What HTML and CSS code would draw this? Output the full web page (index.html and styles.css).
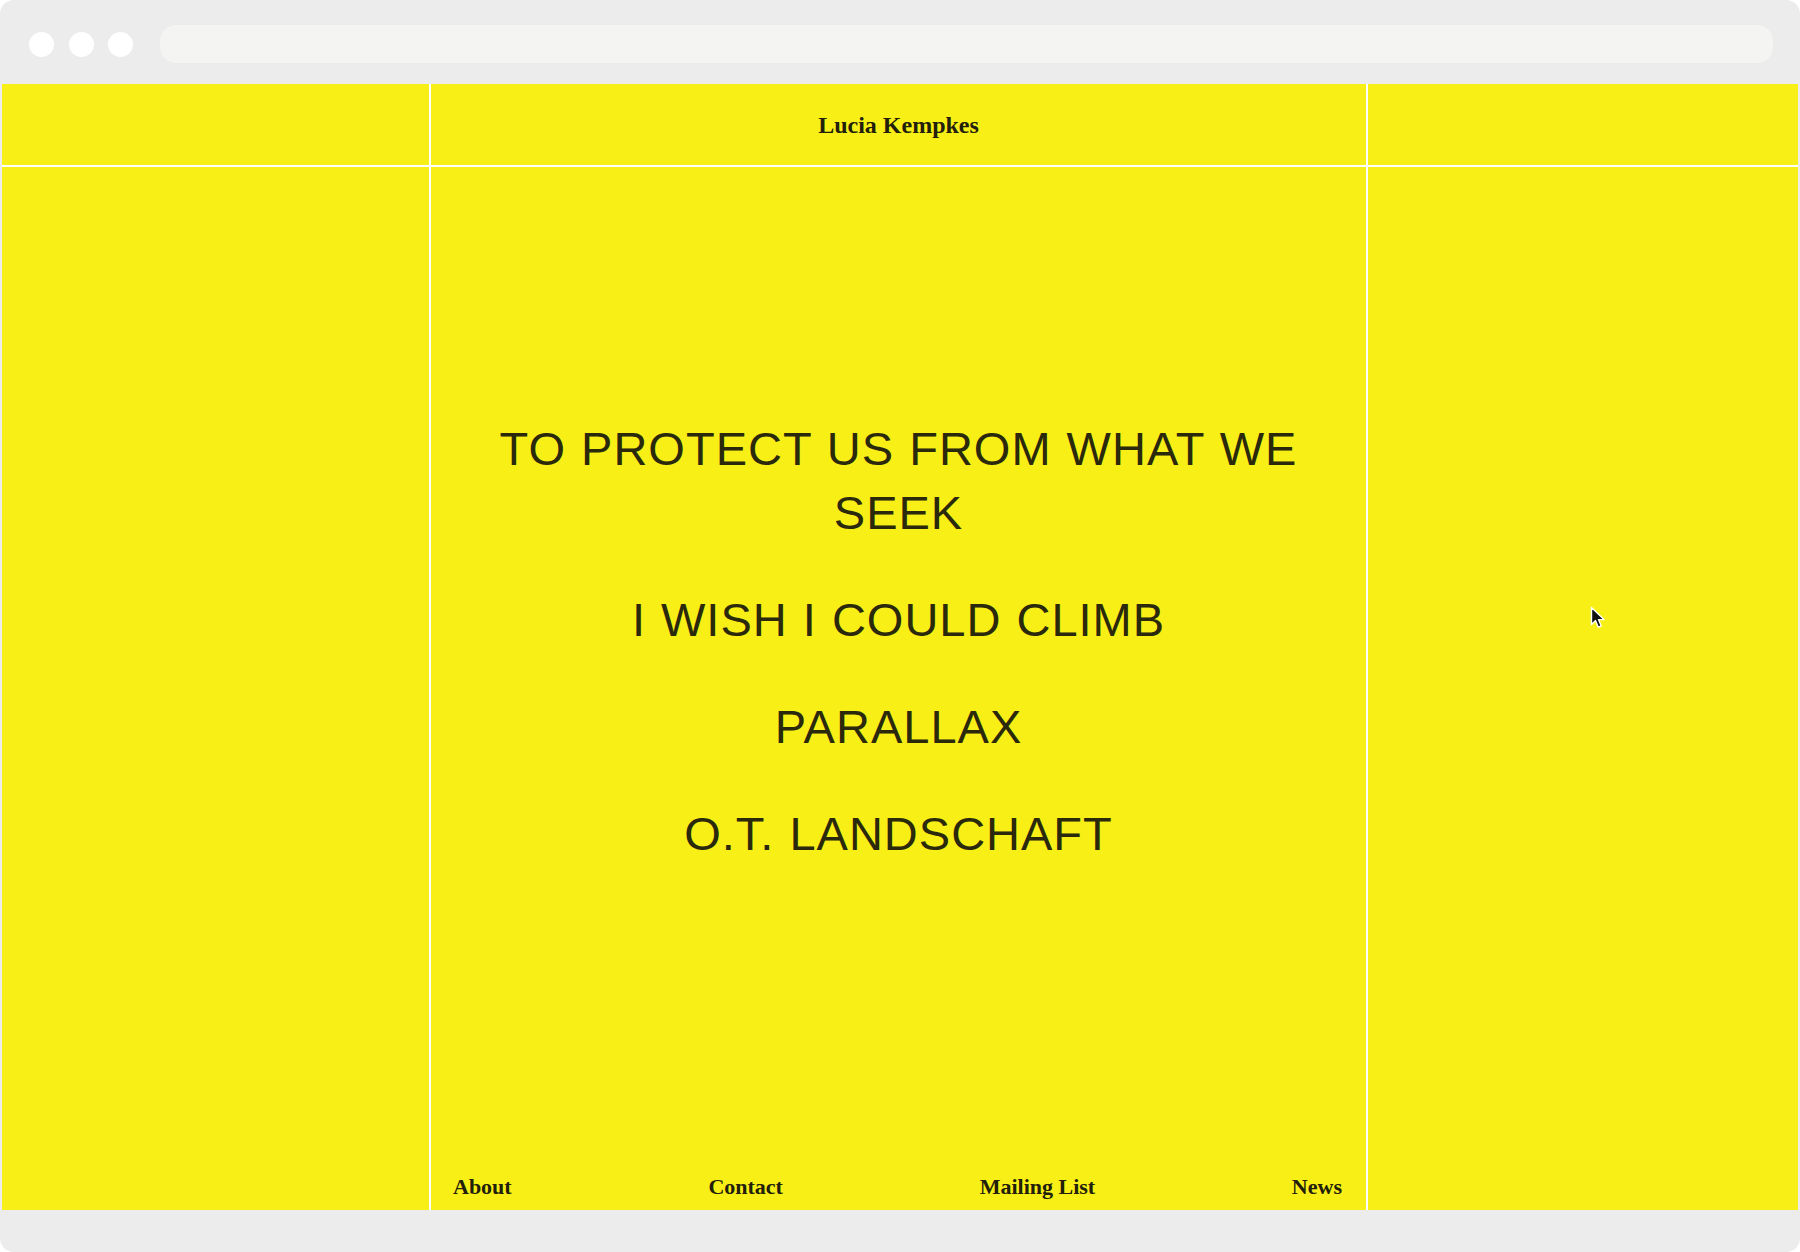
FILE: index.html
```html
<!DOCTYPE html>
<html lang="en">
<head>
<meta charset="utf-8">
<title>Lucia Kempkes</title>
<link rel="stylesheet" href="styles.css">
</head>
<body>
<div class="window">
  <div class="toolbar">
    <div class="dots">
      <span class="dot"></span>
      <span class="dot"></span>
      <span class="dot"></span>
    </div>
    <div class="urlbar"></div>
  </div>
  <div class="site">
    <div class="cell"></div>
    <header class="cell head">
      <h1 class="name">Lucia Kempkes</h1>
    </header>
    <div class="cell"></div>
    <div class="cell"></div>
    <main class="cell center">
      <ul class="works">
        <li class="work">TO PROTECT US FROM WHAT WE SEEK</li>
        <li class="work">I WISH I COULD CLIMB</li>
        <li class="work">PARALLAX</li>
        <li class="work">O.T. LANDSCHAFT</li>
      </ul>
      <nav class="nav">
        <a class="nav-link" href="#">About</a>
        <a class="nav-link" href="#">Contact</a>
        <a class="nav-link" href="#">Mailing List</a>
        <a class="nav-link" href="#">News</a>
      </nav>
    </main>
    <div class="cell side-right">
      <svg class="cursor" width="16" height="24" viewBox="0 0 16 24" aria-hidden="true">
        <path d="M1.5 1.5 L1.5 18.5 L5.5 14.6 L8.3 21.2 L11.2 20 L8.5 13.6 L14 13.6 Z" fill="#111" stroke="#fff" stroke-width="1.4" stroke-linejoin="round"/>
      </svg>
    </div>
  </div>
</div>
</body>
</html>
```

FILE: styles.css
```css
* {
  box-sizing: border-box;
}

html, body {
  margin: 0;
  padding: 0;
  background: #ffffff;
}

.window {
  width: 1800px;
  height: 1252px;
  background: #ececec;
  border-radius: 14px;
  overflow: hidden;
  display: flex;
  flex-direction: column;
}

.toolbar {
  height: 84px;
  padding: 5px 27px 0 29px;
  display: flex;
  align-items: center;
  gap: 27px;
  flex: none;
}

.dots {
  display: flex;
  gap: 14.5px;
}

.dot {
  width: 25px;
  height: 25px;
  border-radius: 50%;
  background: #ffffff;
}

.urlbar {
  flex: 1;
  height: 38px;
  margin-top: -1px;
  background: #f4f4f2;
  border-radius: 16px;
}

.site {
  margin: 0 2px;
  height: 1126px;
  flex: none;
  display: grid;
  grid-template-columns: 427px 935px 1fr;
  grid-template-rows: 81px 1fr;
  gap: 2px;
  background: #ffffff;
}

.cell {
  background: #f8ef17;
}

.head {
  display: flex;
  align-items: center;
  justify-content: center;
}

.name {
  margin: 0;
  font-family: "Liberation Serif", "Times New Roman", serif;
  font-weight: bold;
  font-size: 24px;
  line-height: 28px;
  color: #22200a;
}

.center {
  display: flex;
  flex-direction: column;
}

.works {
  list-style: none;
  margin: 0;
  padding: 250px 40px 0;
  text-align: center;
}

.work {
  font-family: "Liberation Sans", Arial, sans-serif;
  font-size: 47px;
  line-height: 64px;
  letter-spacing: 1px;
  word-spacing: 1px;
  color: #2a290b;
  margin-bottom: 43px;
}

.nav {
  margin-top: auto;
  display: flex;
  justify-content: space-between;
  padding: 0 24px 10px 22px;
}

.nav-link {
  font-family: "Liberation Serif", "Times New Roman", serif;
  font-weight: bold;
  font-size: 22px;
  line-height: 26px;
  color: #22200a;
  text-decoration: none;
}

.side-right {
  position: relative;
}

.cursor {
  position: absolute;
  left: 222px;
  top: 439px;
}
```
